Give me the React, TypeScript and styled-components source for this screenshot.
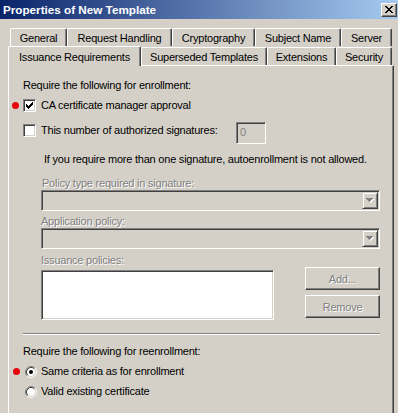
import React, { FC } from 'react';
import styled, { createGlobalStyle } from 'styled-components';

const FACE = '#d4d0c8';
const SHADOW = '#808080';
const DARK = '#404040';

const backTabs = [
  { label: 'General', w: 57 },
  { label: 'Request Handling', w: 105 },
  { label: 'Cryptography', w: 83 },
  { label: 'Subject Name', w: 86 },
  { label: 'Server', w: 51 },
];

const frontTabs = [
  { label: 'Issuance Requirements', w: 133, active: true },
  { label: 'Superseded Templates', w: 126 },
  { label: 'Extensions', w: 69 },
  { label: 'Security', w: 56 },
];

const CheckMark: FC = () => (
  <svg width="7" height="7" viewBox="0 0 7 7" shapeRendering="crispEdges">
    <path
      fill="#000"
      d="M6 0h1v1h-1zM5 1h2v1h-2zM0 2h1v1h-1zM4 2h3v1h-3zM0 3h2v1h-2zM3 3h3v1h-3zM0 4h5v1h-5zM1 5h3v1h-3zM2 6h1v1h-1z"
    />
  </svg>
);

const Radio: FC<{ checked?: boolean }> = ({ checked }) => (
  <svg width="12" height="12" viewBox="0 0 12 12">
    <circle cx="6" cy="6" r="4.2" fill="#fff" />
    <path d="M2.11 9.89 A5.5 5.5 0 0 1 9.89 2.11" fill="none" stroke={SHADOW} strokeWidth="1" />
    <path d="M9.89 2.11 A5.5 5.5 0 0 1 2.11 9.89" fill="none" stroke="#fff" strokeWidth="1" />
    <path d="M2.82 9.18 A4.5 4.5 0 0 1 9.18 2.82" fill="none" stroke={DARK} strokeWidth="1" />
    <path d="M9.18 2.82 A4.5 4.5 0 0 1 2.82 9.18" fill="none" stroke={FACE} strokeWidth="1" />
    {checked && <circle cx="6" cy="6" r="2" fill="#000" />}
  </svg>
);

const Arrow: FC = () => (
  <svg width="8" height="5" viewBox="0 0 8 5" shapeRendering="crispEdges">
    <path d="M1 1h7l-3.5 4z" fill="#fff" />
    <path d="M0 0h7l-3.5 4z" fill={SHADOW} />
  </svg>
);

const Combo: FC = () => (
  <ComboBox>
    <DropButton>
      <Arrow />
    </DropButton>
  </ComboBox>
);

const App: FC = () => (
  <>
    <GlobalStyle />
    <Window>
      <TitleBar>
        <TitleText>Properties of New Template</TitleText>
        <CloseButton>
          <svg width="8" height="7" viewBox="0 0 8 7" shapeRendering="crispEdges">
            <path
              fill="#000"
              d="M0 0h2v1h-2zM6 0h2v1h-2zM1 1h2v1h-2zM5 1h2v1h-2zM2 2h4v1h-4zM3 3h2v1h-2zM2 4h4v1h-4zM1 5h2v1h-2zM5 5h2v1h-2zM0 6h2v1h-2zM6 6h2v1h-2z"
            />
          </svg>
        </CloseButton>
      </TitleBar>

      <TabStrip>
        <TabRow $indent={10} $height={18}>
          {backTabs.map((tab) => (
            <Tab key={tab.label} $w={tab.w}>
              {tab.label}
            </Tab>
          ))}
        </TabRow>
        <TabRow $indent={8} $height={19}>
          {frontTabs.map((tab) => (
            <Tab key={tab.label} $w={tab.w} $active={tab.active}>
              {tab.label}
            </Tab>
          ))}
        </TabRow>
      </TabStrip>

      <Panel>
        <Heading $top={13}>Require the following for enrollment:</Heading>

        <OptionRow $top={7}>
          <Marker />
          <CheckBox>
            <CheckMark />
          </CheckBox>
          <OptionLabel>CA certificate manager approval</OptionLabel>
        </OptionRow>

        <SignaturesRow>
          <CheckBox $offset={2} />
          <OptionLabel $width={195} $offset={2}>
            This number of authorized signatures:
          </OptionLabel>
          <NumberField>0</NumberField>
        </SignaturesRow>

        <Note>If you require more than one signature, autoenrollment is not allowed.</Note>

        <Indented>
          <DisabledLabel $top={11} $indent={1}>
            Policy type required in signature:
          </DisabledLabel>
          <Combo />
          <DisabledLabel $top={4}>Application policy:</DisabledLabel>
          <Combo />
          <DisabledLabel $top={5}>Issuance policies:</DisabledLabel>
          <PoliciesRow>
            <ListBox />
            <ButtonColumn>
              <PushButton>Add...</PushButton>
              <PushButton>Remove</PushButton>
            </ButtonColumn>
          </PoliciesRow>
        </Indented>

        <Separator />

        <Heading $top={10}>Require the following for reenrollment:</Heading>
        <OptionRow $top={7} $indent={2}>
          <Marker $left={-10} />
          <Radio checked />
          <OptionLabel $gap={4}>Same criteria as for enrollment</OptionLabel>
        </OptionRow>
        <OptionRow $top={7} $indent={2}>
          <Radio />
          <OptionLabel $gap={4}>Valid existing certificate</OptionLabel>
        </OptionRow>
      </Panel>
    </Window>
  </>
);
export default App;

const GlobalStyle = createGlobalStyle`
  html, body {
    margin: 0;
    padding: 0;
  }

  body {
    width: 398px;
    height: 413px;
    overflow: hidden;
    background: ${FACE};
    font-family: 'Liberation Sans', Arial, sans-serif;
    font-size: 11px;
    letter-spacing: -0.22px;
    color: #000;
  }
`;

const Window = styled.div`
  display: flex;
  width: 398px;
  height: 413px;
  overflow: hidden;

  flex-direction: column;
  background: ${FACE};
`;

const TitleBar = styled.div`
  display: flex;
  height: 19px;
  padding: 0 1px 0 3px;

  align-items: center;
  justify-content: space-between;
  background: linear-gradient(to right, #0a246a, #a6caf0);
`;

const TitleText = styled.span`
  color: #fff;
  font-weight: bold;
  font-size: 11.7px;
  letter-spacing: 0;
`;

const CloseButton = styled.div`
  display: flex;
  width: 16px;
  height: 14px;
  box-sizing: border-box;

  align-items: center;
  justify-content: center;
  background: ${FACE};
  border: 1px solid;
  border-color: #fff ${DARK} ${DARK} #fff;
  box-shadow: inset -1px -1px ${SHADOW};
`;

const TabStrip = styled.div`
  display: flex;
  margin-top: 9px;

  flex-direction: column;
`;

const TabRow = styled.div<{ $indent: number; $height: number }>`
  display: flex;
  height: ${(p) => p.$height}px;
  padding-left: ${(p) => p.$indent}px;

  align-items: flex-end;
`;

const Tab = styled.div<{ $w: number; $active?: boolean }>`
  position: relative;
  z-index: ${(p) => (p.$active ? 2 : 0)};
  display: flex;
  width: ${(p) => p.$w}px;
  height: ${(p) => (p.$active ? 20 : 18)}px;
  margin-bottom: ${(p) => (p.$active ? -1 : 0)}px;
  box-sizing: border-box;
  padding-top: ${(p) => (p.$active ? 0 : 1)}px;

  align-items: center;
  justify-content: center;
  white-space: nowrap;
  background: ${FACE};
  border: 1px solid;
  border-color: #fff ${DARK} transparent #fff;
  border-bottom: none;
  border-radius: 2px 2px 0 0;
  box-shadow: inset -1px 0 ${SHADOW};
`;

const Panel = styled.div`
  display: flex;
  width: 386px;
  margin-left: 8px;
  box-sizing: border-box;
  padding-left: 14px;

  flex: 1;
  flex-direction: column;
  border-top: 1px solid #fff;
  border-left: 1px solid #fff;
  border-right: 1px solid ${DARK};
  box-shadow: inset -1px 0 ${SHADOW};
`;

const Heading = styled.div<{ $top: number }>`
  margin-top: ${(p) => p.$top}px;
  line-height: 13px;
  white-space: nowrap;
`;

const OptionRow = styled.div<{ $top: number; $indent?: number }>`
  position: relative;
  display: flex;
  height: 13px;
  margin-top: ${(p) => p.$top}px;
  padding-left: ${(p) => p.$indent ?? 0}px;

  align-items: center;
`;

const Marker = styled.span<{ $left?: number }>`
  position: absolute;
  left: ${(p) => p.$left ?? -11}px;
  top: 3px;
  width: 7px;
  height: 7px;

  border-radius: 50%;
  background: #e8000b;
`;

const CheckBox = styled.span<{ $offset?: number }>`
  display: flex;
  width: 13px;
  height: 13px;
  margin-top: ${(p) => p.$offset ?? 0}px;
  box-sizing: border-box;

  flex-shrink: 0;
  align-items: center;
  justify-content: center;
  background: #fff;
  border: 1px solid;
  border-color: ${SHADOW} #fff #fff ${SHADOW};
  box-shadow: inset 1px 1px ${DARK}, inset -1px -1px ${FACE};
`;

const OptionLabel = styled.span<{ $width?: number; $offset?: number; $gap?: number }>`
  width: ${(p) => (p.$width ? `${p.$width}px` : 'auto')};
  margin-left: ${(p) => p.$gap ?? 5}px;
  margin-top: ${(p) => p.$offset ?? 0}px;
  line-height: 13px;
  white-space: nowrap;
`;

const SignaturesRow = styled.div`
  display: flex;
  height: 22px;
  margin-top: 10px;

  align-items: flex-start;
`;

const NumberField = styled.div`
  width: 30px;
  height: 22px;
  box-sizing: border-box;
  padding: 3px 0 0 3px;

  color: ${SHADOW};
  line-height: 13px;
  background: ${FACE};
  border: 1px solid;
  border-color: ${SHADOW} #fff #fff ${SHADOW};
  box-shadow: inset 1px 1px ${DARK};
`;

const Note = styled.div`
  margin-top: 9px;
  padding-left: 21px;
  line-height: 13px;
  white-space: nowrap;
`;

const Indented = styled.div`
  display: flex;
  padding-left: 18px;

  flex-direction: column;
`;

const DisabledLabel = styled.div<{ $top: number; $indent?: number }>`
  height: 12px;
  margin-top: ${(p) => p.$top}px;
  padding-left: ${(p) => p.$indent ?? 0}px;

  color: ${SHADOW};
  line-height: 12px;
  text-shadow: 1px 1px 0 #fff;
  white-space: nowrap;
`;

const ComboBox = styled.div`
  display: flex;
  width: 339px;
  height: 21px;
  margin-top: 1px;
  box-sizing: border-box;

  justify-content: flex-end;
  background: ${FACE};
  border: 1px solid;
  border-color: ${SHADOW} #fff #fff ${SHADOW};
  box-shadow: inset 1px 1px ${DARK}, inset -1px -1px ${FACE};
  padding: 1px;
`;

const DropButton = styled.div`
  display: flex;
  width: 16px;
  height: 17px;
  box-sizing: border-box;

  align-items: center;
  justify-content: center;
  background: ${FACE};
  border: 1px solid;
  border-color: ${FACE} ${DARK} ${DARK} ${FACE};
  box-shadow: inset 1px 1px #fff, inset -1px -1px ${SHADOW};
`;

const PoliciesRow = styled.div`
  display: flex;
  margin-top: 1px;

  gap: 31px;
`;

const ListBox = styled.div`
  width: 233px;
  height: 50px;
  margin-top: 3px;
  box-sizing: border-box;

  background: #fff;
  border: 1px solid;
  border-color: ${SHADOW} #fff #fff ${SHADOW};
  box-shadow: inset 1px 1px ${DARK}, inset -1px -1px ${FACE};
`;

const ButtonColumn = styled.div`
  display: flex;
  flex-direction: column;
  gap: 5px;
`;

const PushButton = styled.div`
  display: flex;
  width: 75px;
  height: 23px;
  box-sizing: border-box;

  align-items: center;
  justify-content: center;
  color: ${SHADOW};
  text-shadow: 1px 1px 0 #fff;
  background: ${FACE};
  border: 1px solid;
  border-color: #fff ${DARK} ${DARK} #fff;
  box-shadow: inset -1px -1px ${SHADOW};
`;

const Separator = styled.div`
  width: 357px;
  height: 1px;
  margin-top: 13px;

  background: ${SHADOW};
  border-bottom: 1px solid #fff;
`;
